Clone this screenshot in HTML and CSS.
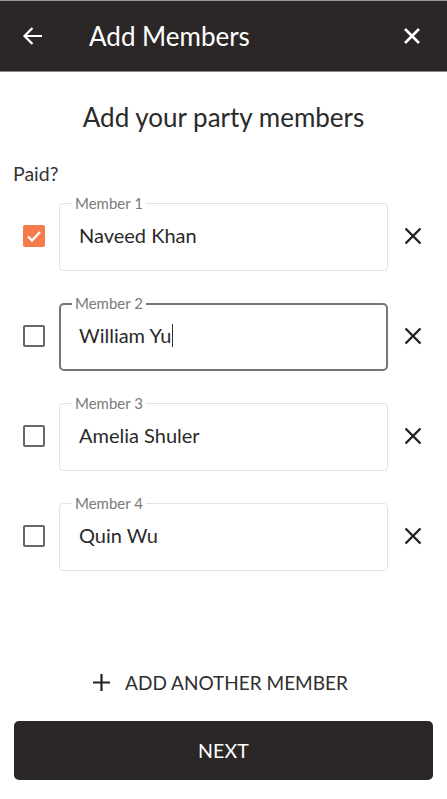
FILE: index.html
```html
<!DOCTYPE html>
<html lang="en">
<head>
<meta charset="utf-8">
<title>Add Members</title>
<link rel="stylesheet" href="styles.css">
</head>
<body>
<div class="screen">
  <header class="topbar">
    <svg class="back" width="22" height="22" viewBox="0 0 22 22"><path d="M20 11H2.5M10.5 3L2.5 11l8 8" fill="none" stroke="#fff" stroke-width="2.2"/></svg>
    <div class="topbar-title">Add Members</div>
    <svg class="close" width="18" height="18" viewBox="0 0 18 18"><path d="M2 2l14 14M16 2L2 16" fill="none" stroke="#fff" stroke-width="2.6"/></svg>
  </header>

  <h1 class="heading">Add your party members</h1>
  <div class="paid">Paid?</div>

  <div class="rows">
    <div class="row">
      <div class="check checked"><svg width="22" height="22" viewBox="0 0 22 22"><path d="M5 11.5l4 4 8-8.5" fill="none" stroke="#fff" stroke-width="2.4"/></svg></div>
      <div class="field"><span class="field-label">Member 1</span><span class="field-value">Naveed Khan</span></div>
      <svg class="remove" width="18" height="18" viewBox="0 0 18 18"><path d="M1.5 1.5l15 15M16.5 1.5l-15 15" fill="none" stroke="#222" stroke-width="2.4"/></svg>
    </div>
    <div class="row">
      <div class="check"></div>
      <div class="field focused"><span class="field-label">Member 2</span><span class="field-value">William Yu<span class="caret"></span></span></div>
      <svg class="remove" width="18" height="18" viewBox="0 0 18 18"><path d="M1.5 1.5l15 15M16.5 1.5l-15 15" fill="none" stroke="#222" stroke-width="2.4"/></svg>
    </div>
    <div class="row">
      <div class="check"></div>
      <div class="field"><span class="field-label">Member 3</span><span class="field-value">Amelia Shuler</span></div>
      <svg class="remove" width="18" height="18" viewBox="0 0 18 18"><path d="M1.5 1.5l15 15M16.5 1.5l-15 15" fill="none" stroke="#222" stroke-width="2.4"/></svg>
    </div>
    <div class="row">
      <div class="check"></div>
      <div class="field"><span class="field-label">Member 4</span><span class="field-value">Quin Wu</span></div>
      <svg class="remove" width="18" height="18" viewBox="0 0 18 18"><path d="M1.5 1.5l15 15M16.5 1.5l-15 15" fill="none" stroke="#222" stroke-width="2.4"/></svg>
    </div>
  </div>

  <div class="add-member">
    <svg width="17" height="17" viewBox="0 0 17 17"><path d="M8.5 0v17M0 8.5h17" fill="none" stroke="#222" stroke-width="2.2"/></svg>
    <span>ADD ANOTHER MEMBER</span>
  </div>

  <button class="next">NEXT</button>
</div>
</body>
</html>
```

FILE: styles.css
```css
* { box-sizing: border-box; }
html, body { margin: 0; padding: 0; background: #fff; }
body { font-family: Lato, "Open Sans", sans-serif; color: #2e2e2e; }
.screen { width: 447px; height: 799px; display: flex; flex-direction: column; }

.topbar {
  flex: none;
  height: 72px;
  background: #2c2727;
  border-top: 1px solid #9a9696;
  border-bottom: 1px solid #8a8686;
  display: flex;
  align-items: center;
  padding: 0 0 0 22px;
  color: #fff;
}
.back { flex: none; }
.topbar-title { font-size: 26px; line-height: 32px; margin-left: 45px; flex: 1; }
.close { flex: none; margin-right: 26px; margin-top: -1px; }

.heading {
  margin: 29px 0 0;
  font-size: 26px;
  line-height: 32px;
  font-weight: 400;
  text-align: center;
  color: #2a2a2a;
}
.paid { margin: 29px 0 0 13px; font-size: 19.5px; line-height: 24px; color: #333; }

.rows { display: flex; flex-direction: column; gap: 32px; margin-top: 17px; }
.row { display: flex; align-items: center; height: 68px; }
.check {
  flex: none;
  width: 22px; height: 22px;
  margin-left: 23px;
  margin-top: -2px;
  border: 2px solid #686868;
  border-radius: 2px;
}
.check.checked { background: #f77a4a; border: none; }
.check svg { display: block; }

.field {
  position: relative;
  flex: none;
  width: 329px; height: 68px;
  margin-left: 14px;
  border: 1px solid #e2e2e2;
  border-radius: 4px;
  padding: 19px 0 0 19px;
}
.field.focused { border: 2px solid #777; border-radius: 5px; padding: 18px 0 0 18px; }
.field-label {
  position: absolute;
  top: -10px; left: 12px;
  padding: 0 3px;
  background: #fff;
  font-size: 15px;
  line-height: 18px;
  color: #7a7a7a;
}
.field.focused .field-label { top: -11px; left: 11px; }
.field-value { font-size: 20px; line-height: 24px; color: #2a2a2a; display: inline-flex; align-items: center; }
.caret { display: inline-block; width: 1px; height: 23px; background: #333; margin-left: 1px; }

.remove { flex: none; margin-left: 16px; margin-top: -2px; }

.add-member {
  flex: none;
  margin-top: 99px;
  display: flex;
  align-items: center;
  justify-content: center;
  gap: 15px;
  height: 24px;
  font-size: 19px;
  color: #2e2e2e;
  padding-right: 6px;
}
.add-member svg { display: block; }

.next {
  flex: none;
  margin: 27px 14px 0;
  height: 59px;
  background: #2c2727;
  color: #fff;
  border: none;
  border-radius: 5px;
  font-family: Lato, "Open Sans", sans-serif;
  font-size: 19.5px;
  letter-spacing: 0.2px;
}
```
